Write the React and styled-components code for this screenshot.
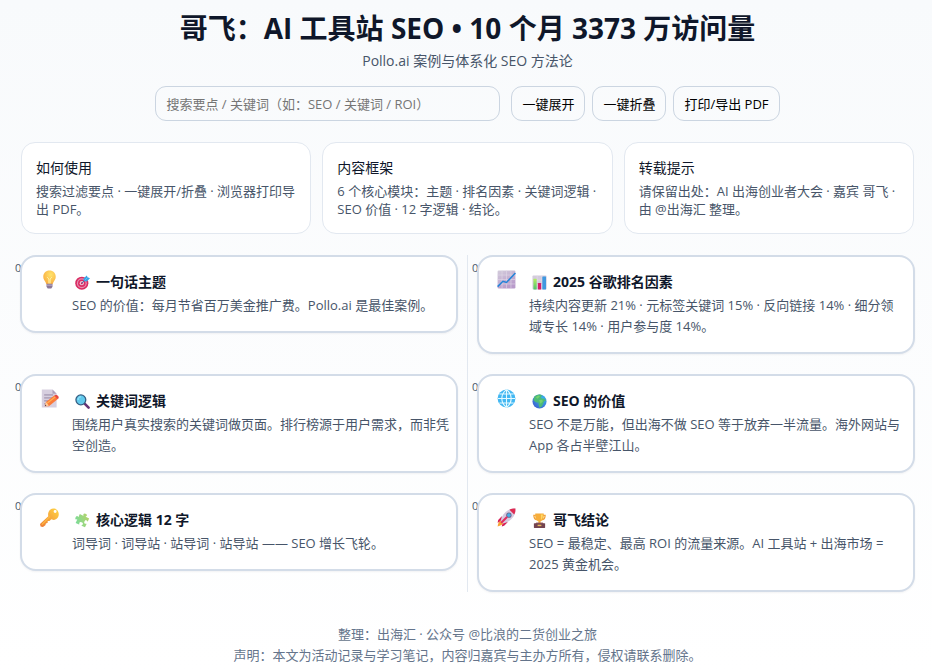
import React, { useState } from "react";
import styled, { createGlobalStyle } from "styled-components";

const GlobalStyle = createGlobalStyle`
  * {
    box-sizing: border-box;
  }

  body {
    margin: 0;
    min-height: 100vh;
    background: linear-gradient(#f8fafc, #ffffff);
    color: #0f172a;
    font-family: "Open Sans", "Noto Sans CJK SC", sans-serif;
    font-size: 13px;
  }
`;

const Page = styled.div`
  padding: 8px 17px 4px 20px;
`;

const Header = styled.header`
  text-align: center;
`;

const Title = styled.h1`
  margin: 0;
  font-size: 28px;
  font-weight: 700;
  line-height: 40px;
`;

const Subtitle = styled.p`
  margin: 2px 0 15px;
  color: #475569;
  font-size: 14px;
  line-height: 21px;
`;

const Toolbar = styled.div`
  display: flex;
  justify-content: center;
  gap: 7px;
`;

const SearchInput = styled.input`
  width: 345px;
  height: 35px;
  margin-right: 4px;
  padding: 0 10px;
  border: 1px solid #cbd5e1;
  border-radius: 11px;
  background: transparent;
  color: #0f172a;
  font-family: inherit;
  font-size: 13px;

  &::placeholder {
    color: #757575;
  }
`;

const ToolButton = styled.button`
  height: 35px;
  padding: 0 10px;
  border: 1px solid #cbd5e1;
  border-radius: 11px;
  background: transparent;
  color: #000;
  font-family: inherit;
  font-size: 13px;
  white-space: nowrap;
  cursor: pointer;
`;

const NoteGrid = styled.section`
  display: grid;
  grid-template-columns: repeat(3, 1fr);
  gap: 11px;
  margin: 21px 1px 0;
`;

const Note = styled.div`
  padding: 15px 10px 15px 14px;
  border: 1px solid #e2e8f0;
  border-radius: 14px;
  background: #fff;
`;

const NoteTitle = styled.div`
  margin-bottom: 4px;
  font-size: 14px;
  line-height: 20px;
`;

const NoteText = styled.div`
  color: #475569;
  line-height: 18px;
`;

const ModuleGrid = styled.main`
  display: grid;
  grid-template-columns: 1fr 1px 1fr;
  gap: 20px 9px;
  align-items: start;
  margin-top: 21px;
`;

const Divider = styled.div`
  grid-column: 2;
  grid-row: 1 / span 3;
  align-self: stretch;
  background: #e2e8f0;
`;

const ModuleItem = styled.div`
  position: relative;
  grid-column: ${(props) => props.$column};
`;

const Marker = styled.span`
  position: absolute;
  top: 4px;
  left: -5px;
  color: #475569;
  font-size: 11px;
  line-height: 18px;
`;

const Card = styled.article`
  position: relative;
  display: flex;
  gap: 11px;
  padding: 13px 7px 15px 15px;
  border: 2px solid #d3dce8;
  border-radius: 16px;
  background: #fff;
  box-shadow: 0 1px 2px rgba(15, 23, 42, 0.05);
`;

const CardIcon = styled.div`
  display: flex;
  justify-content: center;
  flex: 0 0 24px;
`;

const CardBody = styled.div`
  flex: 1;
  min-width: 0;
  padding-top: 2px;
`;

const CardTitle = styled.h2`
  display: flex;
  align-items: center;
  gap: 4px;
  margin: 0 0 3px;
  font-size: 14px;
  font-weight: 700;
  line-height: 20px;
`;

const TitleIcon = styled.span`
  display: flex;
  justify-content: center;
  flex: 0 0 20px;
`;

const CardText = styled.p`
  margin: 0;
  color: #475569;
  line-height: 21px;
`;

const Footer = styled.footer`
  margin-top: 32px;
  color: #64748b;
  line-height: 21px;
  text-align: center;
`;

const Svg = ({ size, children }) => (
  <svg width={size} height={size} viewBox="0 0 32 32" fill="none" aria-hidden="true">
    {children}
  </svg>
);

const BulbIcon = () => (
  <Svg size={19}>
    <defs>
      <radialGradient id="bulb" cx="0.6" cy="0.3" r="0.8">
        <stop stopColor="#ffe36b" />
        <stop offset="1" stopColor="#f9a73b" />
      </radialGradient>
    </defs>
    <path d="M16 1C9.800 1 5.500 5.600 5.500 11.300c0 4.200 2.300 6.200 3.900 9.200.7 1.300 1 3.500 1.600 3.500h10c.6 0 .9-2.200 1.600-3.500 1.600-3 3.900-5 3.900-9.200C26.500 5.600 22.200 1 16 1z" fill="url(#bulb)" />
    <path d="M12 12l3 3v8M20 12l-3 3v8" stroke="#fff3a8" strokeWidth="1.600" />
    <path d="M11 23h10v5l-2 3h-6l-2-3z" fill="#8a7797" />
    <path d="M11 25.500h10" stroke="#c4b5cf" strokeWidth="1.500" />
  </Svg>
);

const TargetIcon = () => (
  <Svg size={15}>
    <circle cx="14.500" cy="17.500" r="14" fill="#d92b62" />
    <circle cx="14.500" cy="17.500" r="10.500" fill="#e58fb0" />
    <circle cx="14.500" cy="17.500" r="8" fill="#dc2f65" />
    <circle cx="14.500" cy="17.500" r="4.500" fill="#f2c3d6" />
    <circle cx="14.500" cy="17.500" r="2" fill="#c91f57" />
    <path d="M14.500 17.500L24 8" stroke="#3276b5" strokeWidth="2" />
    <path d="M18 8l7-7 2 4 5 2-7 7-6-1z" fill="#35a5e8" />
    <path d="M21 11l6-6" stroke="#7cc8ee" strokeWidth="1.500" />
  </Svg>
);

const TrendIcon = () => (
  <Svg size={19}>
    <defs>
      <linearGradient id="trend" x1="0" y1="0" x2="0.5" y2="1">
        <stop stopColor="#d3ccdb" />
        <stop offset="1" stopColor="#b99bcb" />
      </linearGradient>
    </defs>
    <rect x="1" y="1" width="30" height="30" rx="2" fill="url(#trend)" />
    <path d="M8.500 1v30M16 1v30M23.500 1v30M1 8.500h30M1 16h30M1 23.500h30" stroke="#e1d8e8" strokeWidth="1" />
    <path d="M1 28l9-9 6 2L31 5" stroke="#2584d8" strokeWidth="2.600" />
  </Svg>
);

const BarsIcon = () => (
  <Svg size={15}>
    <defs>
      <linearGradient id="bars" x1="0" y1="0" x2="0" y2="1">
        <stop stopColor="#b5ef61" />
        <stop offset="1" stopColor="#4fc46d" />
      </linearGradient>
    </defs>
    <rect x="1" y="1" width="30" height="30" rx="2" fill="#d3cbdc" />
    <path d="M11 1v30M21 1v30M1 11h30M1 21h30" stroke="#e6dfec" strokeWidth="1.200" />
    <rect x="3" y="8" width="7" height="23" rx="1" fill="url(#bars)" />
    <rect x="12.500" y="17" width="7" height="14" rx="1" fill="#d61c68" />
    <rect x="22" y="3" width="8" height="28" rx="1" fill="#3f98e0" />
  </Svg>
);

const MemoIcon = () => (
  <Svg size={19}>
    <path d="M3 1h18l7 7v23H3z" fill="#d7cfdf" />
    <path d="M21 1v7h7z" fill="#aea0ba" />
    <path d="M7 10h15M7 15h15M7 20h10M7 25h6" stroke="#9384a1" strokeWidth="1.600" />
    <path d="M8 29l2-7 14-11 6 6-15 12z" fill="#fb7a3a" />
    <path d="M12 24l14-11" stroke="#ffb052" strokeWidth="2" />
    <path d="M24 11l2-1c3-1 7 4 5 6l-2 1z" fill="#e8473f" />
    <path d="M8 29l2-7 5 6z" fill="#ffd0a0" />
    <path d="M8 29l1-3 2 2z" fill="#54374c" />
  </Svg>
);

const SearchIcon = () => (
  <Svg size={15}>
    <path d="M21 21l8 8" stroke="#663575" strokeWidth="5.500" strokeLinecap="round" />
    <circle cx="12.500" cy="12.500" r="10.500" fill="#62caed" stroke="#345e83" strokeWidth="2.800" />
    <path d="M6.500 12c0-4 2-6 5.500-6" stroke="#a8edff" strokeWidth="2" strokeLinecap="round" />
  </Svg>
);

const GlobeIcon = () => (
  <Svg size={19}>
    <circle cx="16" cy="16" r="15" fill="#42b7f2" />
    <path
      d="M16 1v30M1.500 16h29M4 8.500h24M4 23.500h24M16 1C5.500 9 5.500 23 16 31M16 1c10.500 8 10.500 22 0 30"
      stroke="#e5faff"
      strokeWidth="1.800"
    />
  </Svg>
);

const EarthIcon = () => (
  <Svg size={15}>
    <defs>
      <radialGradient id="earth" cx="0.7" cy="0.3" r="0.8">
        <stop stopColor="#36b7ef" />
        <stop offset="1" stopColor="#3d62cf" />
      </radialGradient>
    </defs>
    <circle cx="16" cy="16" r="15" fill="url(#earth)" />
    <path d="M5 6C8 2 14 0 19 1.500l3 3-4 2 3 3 5 0 4 5-4 1-2 5-3 6-5 3-2-7 0-4-6-1-5-4z" fill="#4dbb78" />
    <path d="M8 7l6-4 3 2-5 5zM15 13l7-1 1 4-5 5z" fill="#75d26d" />
  </Svg>
);

const KeyIcon = () => (
  <Svg size={19}>
    <defs>
      <linearGradient id="key" x1="1" y1="0" x2="0" y2="1">
        <stop stopColor="#ffd645" />
        <stop offset="1" stopColor="#ed7a35" />
      </linearGradient>
    </defs>
    <path
      fillRule="evenodd"
      d="M17 3C22-1 29 1 31 7s-1 13-8 13l-4-1-3 3-3 0 0 3-3 1-1 3-4 3-4-1-1-4L14 14c-1-4 0-8 3-11zm6 3a2.500 2.500 0 1 0 5 0 2.500 2.500 0 0 0-5 0z"
      fill="url(#key)"
    />
    <path d="M3 28l14-14" stroke="#ffbd42" strokeWidth="1.800" />
  </Svg>
);

const PuzzleIcon = () => (
  <Svg size={15}>
    <defs>
      <linearGradient id="puzzle" x1="1" y1="0" x2="0" y2="1">
        <stop stopColor="#bcd163" />
        <stop offset="1" stopColor="#73dda0" />
      </linearGradient>
    </defs>
    <g transform="rotate(25 16 16)" fill="url(#puzzle)">
      <path d="M5 6h8c1-1-1-2-1-3 0-4 8-4 8 0 0 1-2 2-1 3h8v7c-1 1-2-1-4-1-3 0-3 8 0 8 2 0 3-2 4-1v8h-8c-1-1 1-2 1-4 0-4-8-4-8 0 0 2 2 3 1 4H5v-8c-1-1-1 1-3 1-3 0-3-8 0-8 2 0 2 2 3 1z" />
    </g>
  </Svg>
);

const RocketIcon = () => (
  <Svg size={19}>
    <path d="M8 14l-6 6-1 5 9-4zM18 24l-6 6-4 1 2-9z" fill="#d81f59" />
    <path d="M7 21c-4 1-5 5-6 10 5-1 9-3 10-6z" fill="#f7a236" />
    <path d="M31 1C22 0 14 5 8 15l-2 7 4 4 7-2C27 18 32 10 31 1z" fill="#d5c9df" />
    <path d="M31 1c-4 0-7 0-10 2l8 8c2-3 2-6 2-10z" fill="#df2a52" />
    <circle cx="20" cy="12" r="4.500" fill="#6c638b" />
    <circle cx="20" cy="12" r="3" fill="#44aee8" />
    <path d="M8 24l8-8" stroke="#e32c60" strokeWidth="3.500" strokeLinecap="round" />
  </Svg>
);

const TrophyIcon = () => (
  <Svg size={15}>
    <path d="M9 5H4c0 6 2 9 7 9M23 5h5c0 6-2 9-7 9" stroke="#f2a43a" strokeWidth="2.800" />
    <path d="M7 1h18c1 11-2 15-7 17l1 5h-6l1-5C9 16 6 12 7 1z" fill="#f7ae3b" />
    <path d="M19 3h4c0 6-1 9-4 12z" fill="#ffda63" />
    <path d="M9 20h14l2 4H7z" fill="#a56a65" />
    <rect x="4" y="22" width="24" height="10" rx="1" fill="#744450" />
    <rect x="12" y="25" width="8" height="3" fill="#e9b95c" />
  </Svg>
);

const notes = [
  { title: "如何使用", text: "搜索过滤要点 · 一键展开/折叠 · 浏览器打印导出 PDF。" },
  { title: "内容框架", text: "6 个核心模块：主题 · 排名因素 · 关键词逻辑 · SEO 价值 · 12 字逻辑 · 结论。" },
  { title: "转载提示", text: "请保留出处：AI 出海创业者大会 · 嘉宾 哥飞 · 由 @出海汇 整理。" },
];

const modules = [
  {
    icon: BulbIcon,
    titleIcon: TargetIcon,
    title: "一句话主题",
    text: "SEO 的价值：每月节省百万美金推广费。Pollo.ai 是最佳案例。",
  },
  {
    icon: TrendIcon,
    titleIcon: BarsIcon,
    title: "2025 谷歌排名因素",
    text: "持续内容更新 21% · 元标签关键词 15% · 反向链接 14% · 细分领域专长 14% · 用户参与度 14%。",
  },
  {
    icon: MemoIcon,
    titleIcon: SearchIcon,
    title: "关键词逻辑",
    text: "围绕用户真实搜索的关键词做页面。排行榜源于用户需求，而非凭空创造。",
  },
  {
    icon: GlobeIcon,
    titleIcon: EarthIcon,
    title: "SEO 的价值",
    text: "SEO 不是万能，但出海不做 SEO 等于放弃一半流量。海外网站与 App 各占半壁江山。",
  },
  {
    icon: KeyIcon,
    titleIcon: PuzzleIcon,
    title: "核心逻辑 12 字",
    text: "词导词 · 词导站 · 站导词 · 站导站 —— SEO 增长飞轮。",
  },
  {
    icon: RocketIcon,
    titleIcon: TrophyIcon,
    title: "哥飞结论",
    text: "SEO = 最稳定、最高 ROI 的流量来源。AI 工具站 + 出海市场 = 2025 黄金机会。",
  },
];

function App() {
  const [query, setQuery] = useState("");
  const [expanded, setExpanded] = useState(true);

  const keyword = query.trim().toLowerCase();
  const visible = modules.filter((item) =>
    (item.title + item.text).toLowerCase().includes(keyword)
  );

  return (
    <>
      <GlobalStyle />
      <Page>
        <Header>
          <Title>哥飞：AI 工具站 SEO • 10 个月 3373 万访问量</Title>
          <Subtitle>Pollo.ai 案例与体系化 SEO 方法论</Subtitle>
          <Toolbar>
            <SearchInput
              type="text"
              aria-label="搜索要点"
              placeholder="搜索要点 / 关键词（如：SEO / 关键词 / ROI）"
              value={query}
              onChange={(e) => setQuery(e.target.value)}
            />
            <ToolButton type="button" onClick={() => setExpanded(true)}>一键展开</ToolButton>
            <ToolButton type="button" onClick={() => setExpanded(false)}>一键折叠</ToolButton>
            <ToolButton type="button" onClick={() => window.print()}>打印/导出 PDF</ToolButton>
          </Toolbar>
        </Header>

        <NoteGrid>
          {notes.map((note) => (
            <Note key={note.title}>
              <NoteTitle>{note.title}</NoteTitle>
              <NoteText>{note.text}</NoteText>
            </Note>
          ))}
        </NoteGrid>

        <ModuleGrid>
          <Divider />
          {visible.map((item, index) => (
            <ModuleItem key={item.title} $column={index % 2 === 0 ? 1 : 3}>
              <Marker>0</Marker>
              <Card>
                <CardIcon><item.icon /></CardIcon>
                <CardBody>
                  <CardTitle>
                    <TitleIcon><item.titleIcon /></TitleIcon>
                    {item.title}
                  </CardTitle>
                  {expanded && <CardText>{item.text}</CardText>}
                </CardBody>
              </Card>
            </ModuleItem>
          ))}
        </ModuleGrid>

        <Footer>
          <div>整理：出海汇 · 公众号 @比浪的二货创业之旅</div>
          <div>声明：本文为活动记录与学习笔记，内容归嘉宾与主办方所有，侵权请联系删除。</div>
        </Footer>
      </Page>
    </>
  );
}

export default App;
